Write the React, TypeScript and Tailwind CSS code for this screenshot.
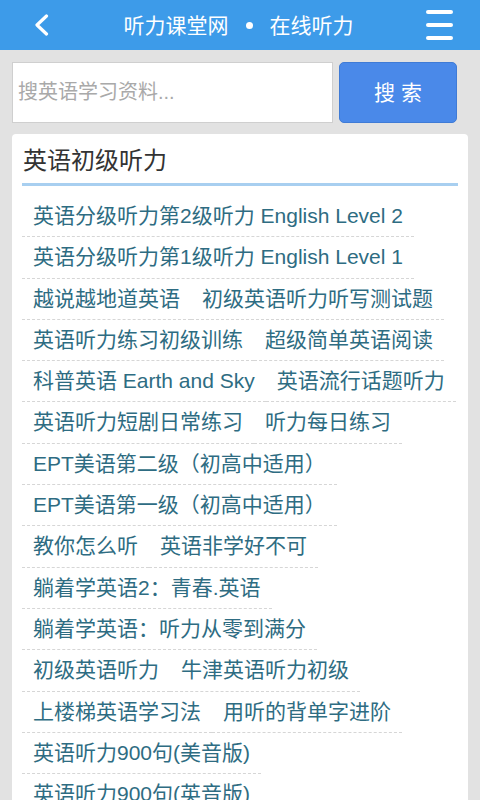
import React from 'react';

const rows: string[][] = [
  ['英语分级听力第2级听力 English Level 2'],
  ['英语分级听力第1级听力 English Level 1'],
  ['越说越地道英语', '初级英语听力听写测试题'],
  ['英语听力练习初级训练', '超级简单英语阅读'],
  ['科普英语 Earth and Sky', '英语流行话题听力'],
  ['英语听力短剧日常练习', '听力每日练习'],
  ['EPT美语第二级（初高中适用）'],
  ['EPT美语第一级（初高中适用）'],
  ['教你怎么听', '英语非学好不可'],
  ['躺着学英语2：青春.英语'],
  ['躺着学英语：听力从零到满分'],
  ['初级英语听力', '牛津英语听力初级'],
  ['上楼梯英语学习法', '用听的背单字进阶'],
  ['英语听力900句(美音版)'],
  ['英语听力900句(英音版)'],
];

export default function App() {
  return (
    <div className="min-h-screen bg-[#e2e2e2] font-['Liberation_Sans','Noto_Sans_CJK_SC',sans-serif]">
      {/* Header */}
      <header className="h-[50px] bg-[#3d9be9] flex items-center pl-[34px] pr-[27px]">
        <svg width="15" height="22" viewBox="0 0 15 22" fill="none">
          <path d="M12.5 2 L3 11 L12.5 20" stroke="white" strokeWidth="3.2" strokeLinecap="round" strokeLinejoin="round" />
        </svg>
        <div className="flex-1 flex items-center justify-center text-white text-[21px] leading-none pl-[2px]">
          <span>听力课堂网</span>
          <span className="w-[7px] h-[7px] rounded-full bg-white mx-[17px]" />
          <span>在线听力</span>
        </div>
        <div className="flex flex-col gap-[9px]">
          <span className="block w-[27px] h-[4px] rounded-full bg-white" />
          <span className="block w-[27px] h-[4px] rounded-full bg-white" />
          <span className="block w-[27px] h-[4px] rounded-full bg-white" />
        </div>
      </header>

      {/* Search */}
      <div className="flex pt-[12px] pl-[12px] gap-[6px]">
        <input
          className="w-[321px] h-[61px] bg-white border border-[#cfcfcf] pl-[5px] text-[20px] text-[#333] placeholder:text-[#a9a9a9] outline-none"
          placeholder="搜英语学习资料..."
        />
        <button className="w-[118px] h-[61px] rounded-[5px] bg-[#4a89e9] border border-[#3f7bd6] text-white text-[21px] tracking-[6px] pl-[6px]">
          搜索
        </button>
      </div>

      {/* Card */}
      <div className="mt-[11px] mx-[12px] bg-white rounded-[4px] px-[10px] pb-[20px]">
        <div className="pt-[12px] pb-[7px] border-b-[3px] border-[#a8cff0]">
          <h2 className="text-[24px] leading-[30px] text-[#333] pl-[1px]">英语初级听力</h2>
        </div>
        <ul className="mt-[10px]">
          {rows.map((row, i) => (
            <li key={i} className="flex">
              {row.map((item) => (
                <a
                  key={item}
                  href="#"
                  className="block px-[11px] h-[41.3px] leading-[40px] border-b border-dashed border-[#d6d6d6] text-[21px] text-[#2e6c82] whitespace-nowrap"
                >
                  {item}
                </a>
              ))}
            </li>
          ))}
        </ul>
      </div>
    </div>
  );
}
